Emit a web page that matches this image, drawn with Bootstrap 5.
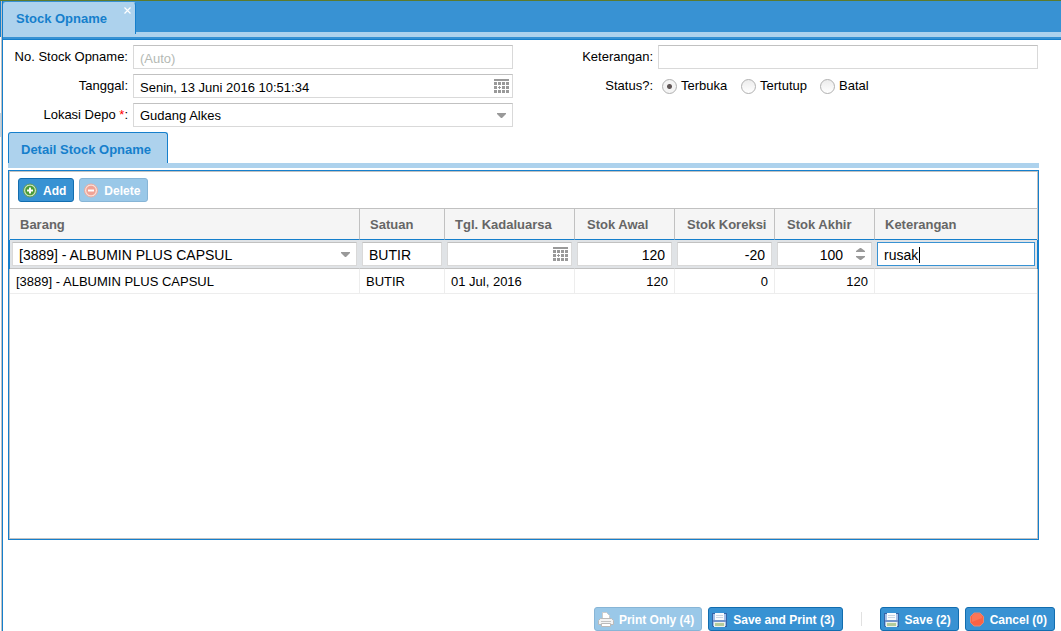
<!DOCTYPE html>
<html lang="id">
<head>
<meta charset="utf-8">
<meta name="viewport" content="width=device-width, initial-scale=1">
<title>Stock Opname</title>
<link href="https://cdn.jsdelivr.net/npm/bootstrap@5.3.0/dist/css/bootstrap.min.css" rel="stylesheet">
<style>
  :root { --blue: #157fcc; --bar: #3892d3; --pale: #add2ed; --line: #c1c1c1; --soft: #d9d9d9; }
  body { font-family: "Liberation Sans", Arial, sans-serif; font-size: 13px; line-height: 16px; color: #000; background: #fff; border-top: 1px solid #5c7a2c; }
  .app-frame { min-height: calc(100vh - 1px); }

  /* strip of the neighbouring panel */
  .side-strip { flex: none; width: 1px; background: linear-gradient(var(--blue) 36px, #fff 36px 112px, #c0d4e4 112px 136px, #fff 136px); }
  .window-pane { border-left: 1px solid var(--blue); box-shadow: -1px 0 var(--line); margin-left: 1px; min-width: 0; }

  /* window tabs */
  .tab-bar { background: var(--bar); height: 31px; }
  .tab-face { background: var(--pale); color: var(--blue); border: 1px solid var(--blue); border-bottom: 0; border-radius: 3px 3px 0 0; font-weight: bold; }
  .window-tab { height: 32px; width: 133px; padding: 0 12px; top: 1px; border-left-color: var(--pale); border-top-color: var(--pale); }
  .tab-close { top: 3px; right: 3px; width: 9px; height: 9px; line-height: 0; }
  .tab-base { height: 5px; background: var(--pale); }
  .tab-edge { height: 3px; background: var(--bar); border-bottom: 1px solid var(--blue); }
  .detail-tab { height: 31px; min-width: 160px; padding: 3px 12px 0; }

  .work-area { padding: 5px 22px 0 5px; }

  /* form fields */
  .form-grid { --bs-gutter-x: 20px; row-gap: 5px; margin-right: -9px; }
  .field-line { gap: 5px; height: 24px; }
  .field-label { width: 120px; text-align: right; flex: none; }
  .field-box { display: block; width: 100%; height: 24px; padding: 2px 6px 0; border: 1px solid var(--soft); border-top-color: var(--line); border-radius: 0; background: #fff; color: #000; appearance: none; outline: 0; font-size: 13px; line-height: 16px; }
  .field-box::placeholder { color: #b4b9b4; opacity: 1; }
  .field-box::-webkit-outer-spin-button, .field-box::-webkit-inner-spin-button { appearance: none; margin: 0; }
  .field-icon { top: 5px; right: 4px; pointer-events: none; }
  .drop-icon { top: 10px; right: 7px; pointer-events: none; }
  .required { color: #f00; }
  .radio-line { padding-left: 4px; }
  .radio-item { width: 79px; gap: 4px; }
  .radio-dot { appearance: none; width: 15px; height: 15px; margin: 0; border: 1px solid #b0b0b0; border-radius: 50%; background: linear-gradient(#ececec, #fff); flex: none; }
  .radio-dot:checked { background: radial-gradient(circle, #5f5656 2px, #f4f4f4 3px); }

  /* detail grid */
  .detail-area { margin-top: 5px; }
  .grid-panel { border: 1px solid var(--blue); margin-top: 2px; }
  .grid-inner { border: 1px solid var(--line); }
  .tool-row { padding: 6px 8px; gap: 5px; }
  .tool-btn { display: inline-flex; align-items: center; height: 24px; gap: 5px; padding: 1px 7px 0 3px; background: var(--bar); border: 1px solid #126daf; border-radius: 3px; color: #fff; font-size: 12px; font-weight: bold; line-height: 16px; white-space: nowrap; }
  .tool-btn:disabled { opacity: .5; }
  .stock-grid { table-layout: fixed; width: 100%; border-collapse: separate; border-spacing: 0; }
  .stock-grid th { height: 32px; padding: 2px 0 0 10px; background: #f5f5f5; color: #666; border-top: 1px solid var(--line); border-right: 1px solid var(--line); border-bottom: 1px solid var(--blue); white-space: nowrap; }
  .stock-grid th.num-head { padding-left: 12px; }
  .stock-grid td { height: 25px; padding: 2px 6px 0; border-right: 1px solid #ededed; border-bottom: 1px solid #ededed; }
  .stock-grid th:last-child, .stock-grid td:last-child { border-right: 0; }
  .stock-grid .edit-row td { height: 29px; padding: 2px; background: #e0e3e6; border-right-color: #e0e3e6; border-bottom-color: var(--line); }
  .edit-row td:first-child { box-shadow: -1px 0 var(--blue); }
  .edit-row td:last-child { box-shadow: 1px 0 var(--blue); }
  .edit-row .field-box { font-size: 14px; }
  .stock-grid .edit-row .field-box.is-current { border-color: var(--bar); }
  .edit-row .with-spin { padding-right: 28px; }
  .spin-icon { top: 6px; right: 7px; pointer-events: none; }
  .caret-bar { left: 42px; top: 5px; width: 1px; height: 16px; background: #000; }

  .action-bar { margin-top: 67px; padding-right: 6px; gap: 6px; }
  .action-split { width: 1px; height: 14px; background: #e1e1e1; margin: 0 12px; }
</style>
</head>
<body>
<svg class="d-none" aria-hidden="true">
  <symbol id="ico-cal" viewBox="0 0 15 14"><path fill="#999" d="M0 0h15v2H0zM0 3h3v3H0zM4 3h3v3H4zM8 3h3v3H8zM12 3h3v3h-3zM0 7h3v3H0zM5 7h1v1h1v1H6v1H5V9H4V8h1zM8 7h3v3H8zM12 7h3v3h-3zM0 11h3v3H0zM4 11h3v3H4zM8 11h3v3H8zM12 11h3v3h-3z"/></symbol>
  <symbol id="ico-down" viewBox="0 0 9 5"><path fill="#999" d="M0 0h9v1L5 5H4L0 1z"/></symbol>
  <symbol id="ico-disk" viewBox="0 0 16 16"><path fill="#3465a8" d="M0 1h15v14H1l-1-1z"/><path fill="#a3bfe8" d="M1 2h13v12H1z"/><path fill="#7294cc" d="M1 8h13v2H1z"/><path fill="#f9fbfd" d="M3 1h9v7H3z"/><path fill="#cbd5e2" d="M4 3h7v1H4zM4 5h7v1H4z"/><path fill="#eef2ea" d="M2 10h11v5H2z"/><path fill="#b3cb9c" d="M3 11h9v3H3z"/></symbol>
</svg>

<div class="app-frame d-flex">
  <div class="side-strip"></div>
  <div class="window-pane d-flex flex-column flex-fill">
    <header>
      <div class="tab-bar">
        <div class="tab-face window-tab position-relative d-flex align-items-center">
          Stock Opname
          <button type="button" class="tab-close position-absolute border-0 p-0 bg-transparent" aria-label="Tutup"><svg width="9" height="9" viewBox="0 0 9 9"><path d="M1.5 1.5l6 6M7.500 1.500l-6 6" stroke="#fff" stroke-width="1.200"/></svg></button>
        </div>
      </div>
      <div class="tab-base"></div>
      <div class="tab-edge"></div>
    </header>

    <main class="work-area d-flex flex-column flex-fill">
      <form class="row form-grid">
        <div class="col-6">
          <div class="field-line d-flex"><label class="field-label pt-1" for="no">No. Stock Opname:</label><input id="no" class="field-box" placeholder="(Auto)"></div>
        </div>
        <div class="col-6">
          <div class="field-line d-flex"><label class="field-label pt-1" for="ket">Keterangan:</label><input id="ket" class="field-box"></div>
        </div>
        <div class="col-6">
          <div class="field-line d-flex"><label class="field-label pt-1" for="tgl">Tanggal:</label>
            <div class="position-relative flex-fill"><input id="tgl" class="field-box" value="Senin, 13 Juni 2016 10:51:34"><svg class="field-icon position-absolute" width="15" height="14"><use href="#ico-cal"/></svg></div></div>
        </div>
        <div class="col-6">
          <div class="field-line d-flex" role="radiogroup" aria-labelledby="status"><span id="status" class="field-label pt-1">Status?:</span>
            <div class="radio-line d-flex">
              <label class="radio-item d-flex align-items-center"><input type="radio" name="status" class="radio-dot" checked>Terbuka</label>
              <label class="radio-item d-flex align-items-center"><input type="radio" name="status" class="radio-dot">Tertutup</label>
              <label class="radio-item d-flex align-items-center"><input type="radio" name="status" class="radio-dot">Batal</label>
            </div></div>
        </div>
        <div class="col-6">
          <div class="field-line d-flex"><label class="field-label pt-1" for="depo">Lokasi Depo <span class="required">*</span>:</label>
            <div class="position-relative flex-fill"><select id="depo" class="field-box"><option>Gudang Alkes</option></select><svg class="drop-icon position-absolute" width="9" height="5"><use href="#ico-down"/></svg></div></div>
        </div>
      </form>

      <section class="detail-area d-flex flex-column flex-fill">
        <div class="d-flex"><div class="tab-face detail-tab d-flex align-items-center">Detail Stock Opname</div></div>
        <div class="tab-base"></div>
        <div class="grid-panel d-flex flex-column flex-fill">
          <div class="grid-inner flex-fill">
            <div class="tool-row d-flex">
              <button type="button" class="tool-btn"><svg width="16" height="16" viewBox="0 0 16 16"><circle cx="8" cy="7.500" r="6.500" fill="#c9e3bd" stroke="#5f9a52"/><circle cx="8" cy="7.500" r="4.800" fill="#4b9b35"/><path d="M8 4.500v6M5 7.500h6" stroke="#fff" stroke-width="2"/></svg>Add</button>
              <button type="button" class="tool-btn" disabled><svg width="16" height="16" viewBox="0 0 16 16"><circle cx="8" cy="7.500" r="6.500" fill="#f5c0b0" stroke="#d8553c"/><circle cx="8" cy="7.500" r="4.800" fill="#e2492f"/><path d="M5 7.500h6" stroke="#fff" stroke-width="2"/></svg>Delete</button>
            </div>
            <table class="stock-grid">
              <colgroup><col width="350"><col width="85"><col width="130"><col width="100"><col width="100"><col width="100"><col></colgroup>
              <thead><tr><th>Barang</th><th>Satuan</th><th>Tgl. Kadaluarsa</th><th class="num-head">Stok Awal</th><th class="num-head">Stok Koreksi</th><th class="num-head">Stok Akhir</th><th>Keterangan</th></tr></thead>
              <tbody>
                <tr class="edit-row">
                  <td><div class="position-relative"><select class="field-box" aria-label="Barang"><option>[3889] - ALBUMIN PLUS CAPSUL</option></select><svg class="drop-icon position-absolute" width="9" height="5"><use href="#ico-down"/></svg></div></td>
                  <td><input class="field-box" aria-label="Satuan" value="BUTIR"></td>
                  <td><div class="position-relative"><input class="field-box" aria-label="Tgl. Kadaluarsa"><svg class="field-icon position-absolute" width="15" height="14"><use href="#ico-cal"/></svg></div></td>
                  <td><input class="field-box text-end" aria-label="Stok Awal" value="120"></td>
                  <td><input class="field-box text-end" aria-label="Stok Koreksi" value="-20"></td>
                  <td><div class="position-relative"><input type="number" class="field-box with-spin text-end" aria-label="Stok Akhir" value="100"><svg class="spin-icon position-absolute" width="9" height="12" viewBox="0 0 9 12"><path fill="#999" d="M0 4V3l4-3h1l4 3v1zM0 8h9v1l-4 3H4L0 9z"/></svg></div></td>
                  <td><div class="position-relative"><input class="field-box is-current" aria-label="Keterangan" value="rusak"><span class="caret-bar position-absolute"></span></div></td>
                </tr>
                <tr><td>[3889] - ALBUMIN PLUS CAPSUL</td><td>BUTIR</td><td>01 Jul, 2016</td><td class="text-end">120</td><td class="text-end">0</td><td class="text-end">120</td><td></td></tr>
              </tbody>
            </table>
          </div>
        </div>
      </section>
    </main>

    <footer class="action-bar d-flex justify-content-end align-items-center">
      <button type="button" class="tool-btn" disabled><svg width="16" height="16" viewBox="0 0 16 16"><path fill="#fff" stroke="#999" d="M4.500.500h4l3 3v4h-7z"/><path fill="#e9e9e9" stroke="#777" d="M2.500 6.500h11l2 2v4h-15v-4z"/><path fill="#888" d="M3 9h10v1H3z"/><path fill="#fff" stroke="#777" d="M3.500 11.500h9v3h-9z"/></svg>Print Only (4)</button>
      <button type="button" class="tool-btn"><svg width="16" height="16"><use href="#ico-disk"/></svg>Save and Print (3)</button>
      <span class="action-split"></span>
      <button type="button" class="tool-btn"><svg width="16" height="16"><use href="#ico-disk"/></svg>Save (2)</button>
      <button type="button" class="tool-btn"><svg width="16" height="16" viewBox="0 0 16 16"><path fill="#fb6244" stroke="#e08a78" d="M5 1h6l3.500 3.500v6L11 14H5l-3.500-3.500v-6z"/><path fill="#fc7658" d="M5 2h6l2 2v2L3 10V4z"/></svg>Cancel (0)</button>
    </footer>
  </div>
</div>
<script src="https://cdn.jsdelivr.net/npm/bootstrap@5.3.0/dist/js/bootstrap.bundle.min.js"></script>
</body>
</html>
